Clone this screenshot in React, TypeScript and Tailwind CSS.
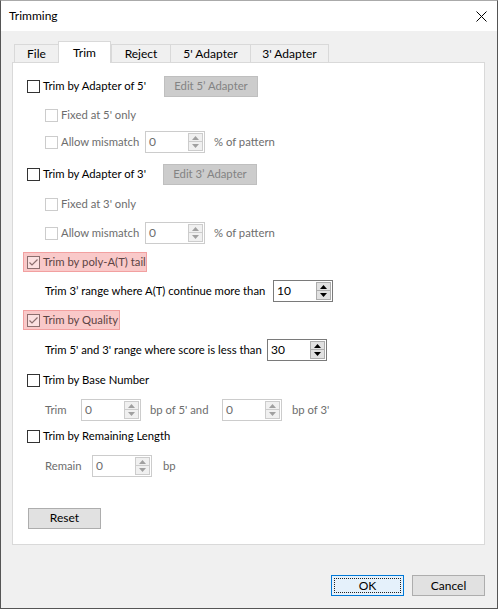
import React from "react";

function Check({ checked = false, disabled = false, hl = false }: { checked?: boolean; disabled?: boolean; hl?: boolean }) {
  const cls = hl
    ? "border-[#8c6e6e] bg-[#fbe0e0]"
    : disabled
    ? "border-[#cccccc] bg-white"
    : "border-[#333333] bg-white";
  return (
    <span className={`w-[13px] h-[13px] border shrink-0 flex items-center justify-center ${cls}`}>
      {checked && (
        <svg width="11" height="11" viewBox="0 0 11 11">
          <path d="M1.5 5.5 L4 8 L9.5 2.5" fill="none" stroke={hl ? "#8c6e6e" : "#333"} strokeWidth="1.2" />
        </svg>
      )}
    </span>
  );
}

function Arrow({ up, disabled }: { up: boolean; disabled: boolean }) {
  return (
    <svg width="7" height="4" viewBox="0 0 7 4">
      <path d={up ? "M0 4 L3.5 0 L7 4 Z" : "M0 0 L3.5 4 L7 0 Z"} fill={disabled ? "#a0a0a0" : "#000"} />
    </svg>
  );
}

function Spin({ value, disabled = false }: { value: string; disabled?: boolean }) {
  const btn = disabled ? "border-[#cccccc] bg-[#f0f0f0]" : "border-[#adadad] bg-[#e1e1e1]";
  return (
    <div
      className={`w-[60px] h-[22px] border bg-white flex shrink-0 text-[12px] ${
        disabled ? "border-[#cccccc] text-[#6d6d6d]" : "border-[#7a7a7a] text-black"
      }`}
    >
      <span className="flex-1 pl-[3px] leading-[20px]">{value}</span>
      <div className="flex flex-col pt-[1px] pr-[1px]">
        <div className={`w-[15px] h-[9px] border flex items-center justify-center ${btn}`}>
          <Arrow up disabled={disabled} />
        </div>
        <div className={`w-[15px] h-[9px] border border-t-0 flex items-center justify-center ${btn}`}>
          <Arrow up={false} disabled={disabled} />
        </div>
      </div>
    </div>
  );
}

function DisabledBtn({ label }: { label: string }) {
  return (
    <div className="w-[94px] h-[21px] border border-[#bfbfbf] bg-[#cccccc] text-[#838383] flex items-center justify-center shrink-0">
      {label}
    </div>
  );
}

export default function App() {
  const tabs = [
    { l: "File", w: "w-[44px]" },
    { l: "Trim", w: "w-[53px]", sel: true },
    { l: "Reject", w: "w-[59px]" },
    { l: "5' Adapter", w: "w-[80px]" },
    { l: "3' Adapter", w: "w-[79px]" },
  ];
  return (
    <div className="w-[498px] h-[609px] border border-[#555555] border-t-[#aaaaaa] flex flex-col font-['Lato',sans-serif] text-[11.3px] text-black bg-[#f0f0f0] overflow-hidden whitespace-nowrap">
      {/* title bar */}
      <div className="h-[30px] bg-white flex items-center justify-between shrink-0">
        <span className="pl-[8px] text-[12px]">Trimming</span>
        <svg width="11" height="11" viewBox="0 0 11 11" className="mr-[10px]">
          <path d="M0.5 0.5 L10.5 10.5 M10.5 0.5 L0.5 10.5" stroke="#000" strokeWidth="1" />
        </svg>
      </div>
      {/* client */}
      <div className="flex-1 flex flex-col pl-[11px] pr-[12px]">
        {/* tabs */}
        <div className="h-[31px] flex items-end pl-[2px] relative z-10 text-[12px]">
          {tabs.map((t) =>
            t.sel ? (
              <div
                key={t.l}
                className={`${t.w} h-[22px] -mb-[1px] bg-white border border-b-0 border-[#d9d9d9] flex items-start justify-center pt-[2px]`}
              >
                {t.l}
              </div>
            ) : (
              <div
                key={t.l}
                className={`${t.w} h-[18px] bg-[#f0f0f0] border border-b-0 border-r-0 last:border-r border-[#d9d9d9] flex items-center justify-center pt-[1px]`}
              >
                {t.l}
              </div>
            )
          )}
        </div>
        {/* panel */}
        <div className="w-[473px] h-[483px] bg-white border border-[#d9d9d9] flex flex-col pl-[14px]">
          <div className="mt-[13px] h-[21px] flex items-center">
            <Check />
            <span className="ml-[3px] w-[121px]">Trim by Adapter of 5'</span>
            <DisabledBtn label="Edit 5’ Adapter" />
          </div>
          <div className="mt-[7px] h-[22px] flex items-center pl-[18px] text-[#6d6d6d]">
            <Check disabled />
            <span className="ml-[3px]">Fixed at 5' only</span>
          </div>
          <div className="mt-[5px] h-[22px] flex items-center pl-[18px] text-[#6d6d6d]">
            <Check disabled />
            <span className="ml-[3px] w-[84px]">Allow mismatch</span>
            <Spin value="0" disabled />
            <span className="ml-[9px]">% of pattern</span>
          </div>
          <div className="mt-[11px] h-[21px] flex items-center">
            <Check />
            <span className="ml-[3px] w-[120px]">Trim by Adapter of 3'</span>
            <DisabledBtn label="Edit 3’ Adapter" />
          </div>
          <div className="mt-[8px] h-[22px] flex items-center pl-[18px] text-[#6d6d6d]">
            <Check disabled />
            <span className="ml-[3px]">Fixed at 3' only</span>
          </div>
          <div className="mt-[7px] h-[22px] flex items-center pl-[18px] text-[#6d6d6d]">
            <Check disabled />
            <span className="ml-[3px] w-[84px]">Allow mismatch</span>
            <Spin value="0" disabled />
            <span className="ml-[9px]">% of pattern</span>
          </div>
          <div className="mt-[7px] h-[22px] flex items-center -ml-[4px]">
            <div className="h-[20px] w-[124px] border border-[#f2a0a0] bg-[#f9c9c9] flex items-center pl-[3px] text-[#5c4444]">
              <Check checked hl />
              <span className="ml-[3px]">Trim by poly-A(T) tail</span>
            </div>
          </div>
          <div className="mt-[7px] h-[22px] flex items-center pl-[18px]">
            <span className="w-[228px]">Trim 3’ range where A(T) continue more than</span>
            <Spin value="10" />
          </div>
          <div className="mt-[7px] h-[22px] flex items-center -ml-[4px]">
            <div className="h-[20px] w-[97px] border border-[#f2a0a0] bg-[#f9c9c9] flex items-center pl-[3px] text-[#5c4444]">
              <Check checked hl />
              <span className="ml-[3px]">Trim by Quality</span>
            </div>
          </div>
          <div className="mt-[8px] h-[22px] flex items-center pl-[18px]">
            <span className="w-[222px]">Trim 5' and 3' range where score is less than</span>
            <Spin value="30" />
          </div>
          <div className="mt-[8px] h-[22px] flex items-center">
            <Check />
            <span className="ml-[3px]">Trim by Base Number</span>
          </div>
          <div className="mt-[8px] h-[22px] flex items-center pl-[18px] text-[#6d6d6d]">
            <span className="w-[36px]">Trim</span>
            <Spin value="0" disabled />
            <span className="ml-[9px] w-[72px]">bp of 5' and</span>
            <Spin value="0" disabled />
            <span className="ml-[10px]">bp of 3'</span>
          </div>
          <div className="mt-[4px] h-[22px] flex items-center">
            <Check />
            <span className="ml-[3px]">Trim by Remaining Length</span>
          </div>
          <div className="mt-[8px] h-[22px] flex items-center pl-[18px] text-[#6d6d6d]">
            <span className="w-[47px]">Remain</span>
            <Spin value="0" disabled />
            <span className="ml-[11px]">bp</span>
          </div>
          <div className="mt-[30px] h-[22px] flex items-center pl-[1px]">
            <div className="w-[73px] h-[21px] border border-[#adadad] bg-[#e1e1e1] flex items-center justify-center text-[12px]">
              Reset
            </div>
          </div>
        </div>
        <div className="mt-[30px] flex justify-end gap-[8px] text-[12px]">
          <div className="w-[73px] h-[21px] border border-[#0078d7] bg-[#e5f1fb] flex items-center justify-center p-[2px]">
            <div className="w-full h-full border border-dotted border-[#222] flex items-center justify-center">OK</div>
          </div>
          <div className="w-[73px] h-[21px] border border-[#adadad] bg-[#e1e1e1] flex items-center justify-center">
            Cancel
          </div>
        </div>
      </div>
    </div>
  );
}
